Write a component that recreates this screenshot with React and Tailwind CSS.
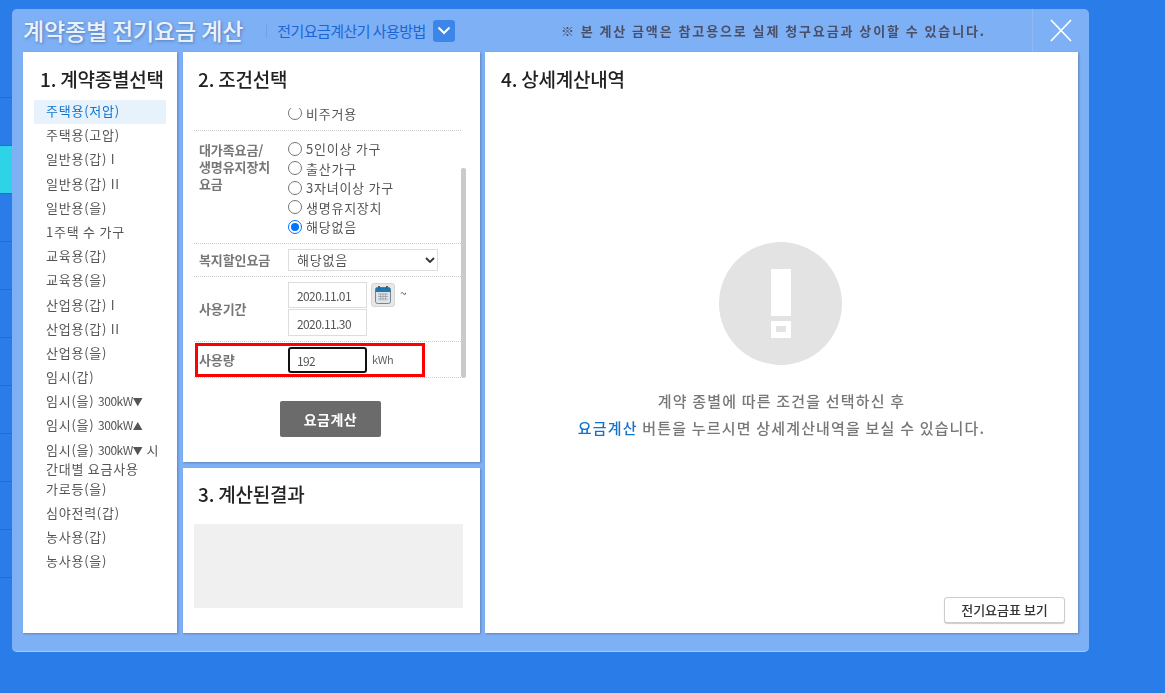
const font = { fontFamily: "'Noto Sans CJK KR', 'Liberation Sans', sans-serif" };

function Low() {
  return <><span className="tracking-[-0.5px] text-[12px] leading-none">300kW</span><span className="text-[10px] leading-none tracking-normal">▼</span></>;
}

function High() {
  return <><span className="tracking-[-0.5px] text-[12px] leading-none">300kW</span><span className="text-[10px] leading-none tracking-normal">▲</span></>;
}

const contractTypes = [
  { id: 'a', label: '주택용(저압)', active: true },
  { id: 'b', label: '주택용(고압)' },
  { id: 'c', label: '일반용(갑) I' },
  { id: 'd', label: '일반용(갑) II' },
  { id: 'e', label: '일반용(을)' },
  { id: 'f', label: '1주택 수 가구' },
  { id: 'g', label: '교육용(갑)' },
  { id: 'h', label: '교육용(을)' },
  { id: 'i', label: '산업용(갑) I' },
  { id: 'j', label: '산업용(갑) II' },
  { id: 'k', label: '산업용(을)' },
  { id: 'l', label: '임시(갑)' },
  { id: 'm', label: <>임시(을) <Low /></> },
  { id: 'n', label: <>임시(을) <High /></> },
  { id: 'o', label: <>임시(을) <Low /> 시<br />간대별 요금사용<br />가로등(을)</> },
  { id: 'p', label: '심야전력(갑)' },
  { id: 'q', label: '농사용(갑)' },
  { id: 'r', label: '농사용(을)' },
];

const familyOptions = ['5인이상 가구', '출산가구', '3자녀이상 가구', '생명유지장치', '해당없음'];

function Radio({ checked }) {
  return (
    <span className={`block w-[14px] h-[14px] shrink-0 rounded-full border bg-white ${checked ? 'border-[#0075ff] p-[2px]' : 'border-[#767676]'}`}>
      {checked && <span className="block w-full h-full rounded-full bg-[#0075ff]" />}
    </span>
  );
}

function CalendarIcon() {
  return (
    <span className="flex items-center justify-center w-6 h-6 bg-[#e8e8e8] border border-[#d5d5d5] rounded-[3px]">
      <svg width="16" height="18" viewBox="0 0 16 18">
        <rect x="0.5" y="1.5" width="15" height="16" rx="2" fill="#dfe3e6" stroke="#6f8696" />
        <path d="M0.5 3.5a2 2 0 0 1 2-2h11a2 2 0 0 1 2 2V6H0.5z" fill="#1878b8" />
        <rect x="3" y="0" width="2" height="3" fill="#4a6070" />
        <rect x="11" y="0" width="2" height="3" fill="#4a6070" />
        <path d="M3 8h10M3 10.5h10M3 13h10M5.5 7.5v7M8 7.5v7M10.5 7.5v7" stroke="#9aa3a8" strokeWidth="0.8" />
      </svg>
    </span>
  );
}

function AlertIcon() {
  return (
    <svg width="123" height="123" viewBox="0 0 123 123">
      <circle cx="61.5" cy="61.5" r="61.5" fill="#e3e3e3" />
      <rect x="52" y="27" width="20" height="47" fill="#fff" />
      <rect x="52" y="79" width="20" height="17" fill="#fff" />
      <rect x="57" y="84" width="10" height="6" fill="#e3e3e3" />
    </svg>
  );
}

function Title({ children, className = '' }) {
  return <h2 className={`text-[19px] leading-[28px] font-medium text-[#222] tracking-[-0.2px] whitespace-nowrap ${className}`}>{children}</h2>;
}

function BackgroundRows() {
  // 모달 뒤에 보이는 페이지 왼쪽 목록의 가로줄
  return (
    <div className="fixed inset-0 -z-10 bg-[#2a7de9]">
      <div className="w-3 pt-[97px]">
        {Array.from({ length: 11 }).map((_, i) => (
          <div key={i} className={`h-12 border-t border-[#1f6fd6] ${i === 1 ? 'bg-[#2fd3e8]' : ''}`} />
        ))}
      </div>
    </div>
  );
}

export default function App() {
  return (
    <div className="h-[693px] overflow-hidden pt-[9px] pl-3" style={font}>
      <BackgroundRows />
      <div className="w-[1077px] h-[643px] bg-[#7eb0f5] rounded-[5px] border-b border-[#a8c9f8] flex flex-col">
        {/* 헤더 */}
        <div className="h-[43px] flex items-center shrink-0">
          <h1 className="ml-[11px] text-[23px] font-medium text-[#e9f1fd] tracking-[-0.15px] whitespace-nowrap [text-shadow:1px_1px_3px_rgba(60,90,140,0.6)]">계약종별 전기요금 계산</h1>
          <span className="ml-[23px] w-px h-[14px] bg-[#6ea2ea]" />
          <span className="ml-[10px] mt-[2px] text-[15px] text-[#1c66d4] tracking-[-0.55px] whitespace-nowrap">전기요금계산기 사용방법</span>
          <span className="ml-[7px] w-[22px] h-[22px] rounded-[3px] bg-[#3c86ea] flex items-center justify-center">
            <svg width="14" height="9" viewBox="0 0 14 9"><path d="M1.5 1.5 7 7l5.5-5.5" fill="none" stroke="#fff" strokeWidth="2" /></svg>
          </span>
          <span className="ml-auto mr-[46px] text-[13px] font-bold text-[#4a4f66] tracking-[1.9px] whitespace-nowrap">※ 본 계산 금액은 참고용으로 실제 청구요금과 상이할 수 있습니다.</span>
          <div className="h-full w-[57px] shrink-0 border-l border-[#8fbaf6] flex items-center pl-[17px]">
            <svg width="22" height="23" viewBox="0 0 22 23"><path d="M1 1 21 22M21 1 1 22" stroke="#fff" strokeWidth="1.7" /></svg>
          </div>
        </div>

        <div className="flex pl-[11px] h-[581px] gap-[6px]">
          {/* 1. 계약종별선택 */}
          <div className="w-[154px] bg-white shadow-[1px_1px_2px_rgba(60,80,110,0.45)] flex flex-col">
            <Title className="mt-[13px] ml-[17px]">1. 계약종별선택</Title>
            <ul className="mt-[7px] ml-[11px] w-[132px] text-[13px] leading-[19.5px] text-[#555] tracking-[0.75px]">
              {contractTypes.map(({ id, label, active }) => (
                <li key={id} className={`px-3 pt-[1px] pb-[3.7px] whitespace-nowrap ${active ? 'bg-[#e8f2fd] text-[#1273c9]' : ''}`}>{label}</li>
              ))}
            </ul>
          </div>

          <div className="flex flex-col w-[297px] gap-[6px]">
            {/* 2. 조건선택 */}
            <div className="h-[410px] bg-white shadow-[1px_1px_2px_rgba(60,80,110,0.45)] flex flex-col pl-[11px]">
              <Title className="mt-[13px] ml-[4px]">2. 조건선택</Title>
              <div className="relative mt-[15px] h-[270px] w-[272px] text-[13px] text-[#555] tracking-[0.75px]">
                <div className="absolute right-0 top-[60px] bottom-0 w-[5px] rounded-[2px] bg-[#cacaca]" />
                <div className="w-[267px]">
                  {/* 스크롤로 윗부분이 잘린 라디오 */}
                  <div className="flex items-start gap-[4px] h-[23px] border-b border-dotted border-[#ccc] pl-[94px]">
                    <div className="h-[12px] overflow-hidden">
                      <div className="-mt-[2px]"><Radio /></div>
                    </div>
                    <span className="leading-[12px]">비주거용</span>
                  </div>
                  <div className="flex h-[113px] border-b border-dotted border-[#ccc] pt-[8px]">
                    <div className="w-[94px] pl-[5px] text-[13px] font-bold text-[#777] leading-[17px] pt-[2px] tracking-[-0.1px]">대가족요금/<br />생명유지장치<br />요금</div>
                    <div className="flex flex-col">
                      {familyOptions.map((o, i) => (
                        <label key={o} className="flex items-center gap-[4px] h-[19.5px] leading-none">
                          <Radio checked={i === 4} />
                          <span>{o}</span>
                        </label>
                      ))}
                    </div>
                  </div>
                  <div className="flex items-center h-[33px] border-b border-dotted border-[#ccc]">
                    <div className="w-[94px] pl-[5px] font-bold text-[#777] tracking-[-0.1px]">복지할인요금</div>
                    <div className="w-[150px] h-[22px] border border-[#ddd] flex items-center justify-between pl-[8px] pr-[2px]">
                      <span>해당없음</span>
                      <svg width="10" height="6" viewBox="0 0 10 6"><path d="M1 1l4 4 4-4" fill="none" stroke="#333" strokeWidth="1.8" /></svg>
                    </div>
                  </div>
                  <div className="flex h-[65px] items-center border-b border-dotted border-[#ccc]">
                    <div className="w-[94px] pl-[5px] font-bold text-[#777] tracking-[-0.1px]">사용기간</div>
                    <div className="flex flex-col gap-[1px]">
                      <div className="flex items-start">
                        <span className="w-[79px] h-[26px] border border-[#ddd] flex items-center pl-[8px] pt-[2px] text-[12px] tracking-[-0.6px]">2020.11.01</span>
                        <span className="ml-[4px] mt-[1px]"><CalendarIcon /></span>
                        <span className="ml-[5px] mt-[1px] text-[12px] leading-[20px]">~</span>
                      </div>
                      <span className="w-[79px] h-[27px] border border-[#ddd] flex items-center pl-[8px] pt-[2px] text-[12px] tracking-[-0.6px]">2020.11.30</span>
                    </div>
                  </div>
                  <div className="flex items-center h-[36px] border-b border-dotted border-[#ccc]">
                    <div className="w-[94px] pl-[5px] font-bold text-[#777] tracking-[-0.1px]">사용량</div>
                    <span className="w-[79px] h-[26px] mt-[1px] border-2 border-[#111] rounded-[3px] flex items-center pl-[7px] pt-[2px] text-[12px] tracking-[-0.6px]">192</span>
                    <span className="ml-[5px] text-[11px] text-[#666] tracking-[-0.4px]">kWh</span>
                  </div>
                </div>
                {/* 사용량 강조 표시 */}
                <div className="absolute left-[1px] top-[235px] w-[230px] h-[34px] border-[3px] border-[#ff0000]" />
              </div>
              <button className="mt-[23px] ml-[86px] w-[101px] h-9 bg-[#6b6b6b] rounded-[2px] text-white text-[14px] font-bold tracking-[0.5px]">요금계산</button>
            </div>

            {/* 3. 계산된결과 */}
            <div className="flex-1 bg-white shadow-[1px_1px_2px_rgba(60,80,110,0.45)] pl-[11px]">
              <Title className="mt-[12px] ml-[4px]">3. 계산된결과</Title>
              <div className="mt-[16px] w-[269px] h-[84px] bg-[#f0f0f0]" />
            </div>
          </div>

          {/* 4. 상세계산내역 */}
          <div className="w-[593px] -ml-[1px] bg-white shadow-[1px_1px_2px_rgba(60,80,110,0.45)] flex flex-col">
            <Title className="mt-[13px] ml-[16px]">4. 상세계산내역</Title>
            <div className="mt-[149px] self-center -translate-x-[1px]"><AlertIcon /></div>
            <p className="mt-[22px] text-center text-[15px] leading-[27px] font-medium text-[#777] tracking-[1.18px]">
              계약 종별에 따른 조건을 선택하신 후<br />
              <span className="text-[#1273c9]">요금계산</span> 버튼을 누르시면 상세계산내역을 보실 수 있습니다.
            </p>
            <div className="mt-auto mb-[10px] mr-[13px] self-end">
              <button className="w-[121px] h-[26px] bg-white border border-[#ccc] rounded-[3px] shadow-[0_1px_1px_rgba(0,0,0,0.2)] text-[13px] font-medium text-[#333]">전기요금표 보기</button>
            </div>
          </div>
        </div>
      </div>
    </div>
  );
}
